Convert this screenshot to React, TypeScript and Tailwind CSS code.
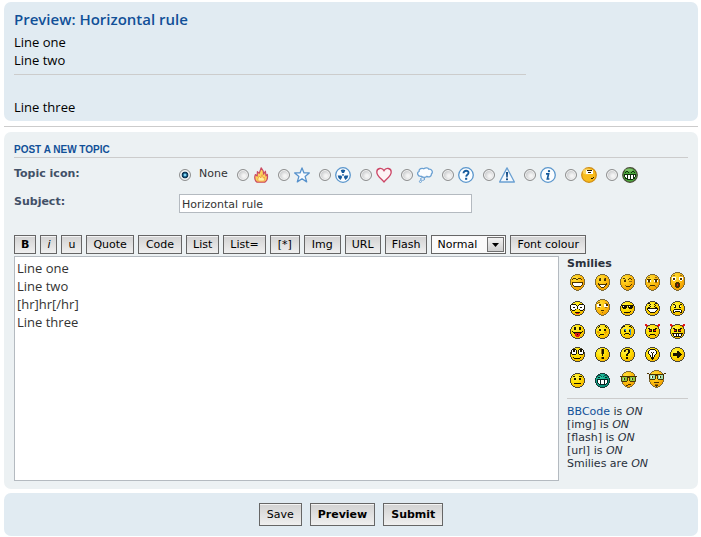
import { useState, type ReactNode } from "react";

const INK: Record<string, string> = {
  k: "#1a1400",
  w: "#ffffff",
  r: "#e01818",
  b: "#2a8ad8",
  o: "#eaa000",
  n: "#9a6c10",
  g: "#8fc83c",
  l: "#9fe0b0",
  t: "#0a5c50",
};

type FaceSpec = {
  name: string;
  w?: number;
  h?: number;
  tone?: "yellow" | "gold" | "teal";
  rows: string[];
};

const TONES = {
  yellow: { edge: "#4a4636", from: "#fff24a", mid: "#ffe000", to: "#f5b400", ink: "#1a1400" },
  gold: { edge: "#7d6a36", from: "#ffe23c", mid: "#fdc010", to: "#f09a00", ink: "#4a3200" },
  teal: { edge: "#163c38", from: "#2cc8a4", mid: "#12a88c", to: "#0a8a74", ink: "#062420" },
};

// Each face is a pixel-edged disc (or a taller egg) with its features drawn from a character map.
function Face({ name, w = 15, h = 15, tone = "yellow", rows }: FaceSpec) {
  const c = TONES[tone];
  const left = Math.floor((w - 15) / 2);
  const egg = h > 15;
  const side = h - 11;
  const outer = egg
    ? `M5 0h5v1h2v1h1v1h1v2h1v${side}h-1v2h-1v1h-1v1h-1v1h-2v1h-3v-1h-2v-1h-1v-1h-1v-1h-1v-2h-1v-${side}h1v-2h1v-1h1v-1h2z`
    : "M5 0h5v1h2v1h1v1h1v2h1v5h-1v2h-1v1h-1v1h-2v1h-5v-1h-2v-1h-1v-1h-1v-2h-1v-5h1v-2h1v-1h1v-1h2z";
  const inner = egg
    ? `M5 1h5v1h2v1h1v2h1v${side}h-1v2h-1v1h-1v1h-2v1h-3v-1h-2v-1h-1v-1h-1v-2h-1v-${side}h1v-2h1v-1h2z`
    : "M5 1h5v1h2v1h1v2h1v5h-1v2h-1v1h-2v1h-5v-1h-2v-1h-1v-2h-1v-5h1v-2h1v-1h2z";
  const id = `face-${name}`;
  return (
    <svg width={w} height={h} viewBox={`0 0 ${w} ${h}`} shapeRendering="crispEdges" role="img" aria-label={name}>
      <defs>
        <radialGradient id={id} cx="35%" cy="28%" r="80%">
          <stop offset="0" stopColor={c.from} />
          <stop offset="0.5" stopColor={c.mid} />
          <stop offset="1" stopColor={c.to} />
        </radialGradient>
      </defs>
      <g transform={`translate(${left} 0)`}>
        <path d={outer} fill={c.edge} />
        <path d={inner} fill={`url(#${id})`} />
      </g>
      {rows.flatMap((row, y) =>
        row.split("").map((ch, x) =>
          INK[ch] ? (
            <rect key={`${x}-${y}`} x={x} y={y} width="1" height="1" fill={ch === "k" ? c.ink : INK[ch]} />
          ) : null
        )
      )}
    </svg>
  );
}

const SMILIES: FaceSpec[][] = [
  [
    { name: "very-happy", h: 17, tone: "gold", rows: ["", "", "", "", "...kkk..kkk", "..k...kk...k", "", "", "..kkkkkkkkkkk", "..kwwwwwwwwwk", "..kwwwwwwwwwk", "...kwwwwwwwk", "....kkkkkkk"] },
    { name: "smile", h: 17, tone: "gold", rows: ["", "", "", "", "....nk...nk", "....kk...kk", "....kk...kk", "", "", "...k.......k", "...kkkkkkkkk", "....kwwwwwk", ".....kwwwk", "......kkk"] },
    { name: "wink", h: 17, tone: "gold", rows: ["", "", "", "", "...kk....kk", ".....n..k..k", "....kk", "....kk...nnn", "", "", "...........k", ".....n....k", "......kkkk"] },
    { name: "sad", h: 17, tone: "gold", rows: ["", "", "", "...nn.....nn", "", "..kkkk...kkkk", "..wkkw...wkkw", "..wkkw...wkkw", "...nn.....nn", "", "", ".....kkkkk", "....n.....n", "...n.......n"] },
    { name: "surprised", h: 19, tone: "gold", rows: ["", "", "", "...nn.....nn", "", "..wwww...wwww", "..wkkw...wkkw", "..wkkw...wkkw", "...ww.....ww", "", "......kkk", ".....kkkkk", ".....kkrkk", ".....kkrkk", ".....kkkkk", "......kkk"] },
  ],
  [
    { name: "shocked", rows: ["", "", "", ".kkkkk...kkkkk", "kwwwwwk.kwwwwwk", "kwwwwwwkwwwwwwk", "kwwkkwwkwwkkwwk", "kwwwwwwkwwwwwwk", ".kwwwk...kwwwk", "..kkk.....kkk", "", ".....kkkkk", "......rrr"] },
    { name: "confused", h: 17, tone: "gold", rows: ["", "", "", "...nn", "..n.......nn", "..wwkk...wwkk", "..wwkk...wwkk", "..wwww...wwww", "...nn.....nn", "", "", "......kkk", "", ".......n"] },
    { name: "cool", rows: ["", "", "", "", ".kkkkkkkkkkkkk", "..kwkkk.kwkkk", "..kkkkk.kkkkk", "...kkk...kkk", "", "", "..........k", "....kkkkkk", "......oo"] },
    { name: "laughing", rows: ["", "", "...kk.....kk", ".....k...k", "....k.....k", ".....k...k", "...kk.....kk", "..kkkkkkkkkkk", "..kwwwwwwwwwk", "...kwwwwwwwk", "....kwwwwwk", ".....kkkkk"] },
    { name: "mad", rows: ["", "", "", "...kk.....kk", ".....k...k", "....wk...kw", "....kk...kk", "", "....kkkkkkk", "...kwwwwwwwk", "...kwkkkkkwk", "...kk.....kk"] },
  ],
  [
    { name: "razz", rows: ["", "", "", "....kk...kk", "....kk...kk", "....kk...kk", "", "..k.........k", "...kkkkkkkkk", "....krrrrrk", ".....rrkrr", ".....rrrrr", "......rrr"] },
    { name: "embarrassed", rows: ["", "", "....k.....k", "...k.......k", "", "....kk...kk", "....kk...kk", "..oo......oo", "..ooo....ooo", "...o......o", ".....kkkk", "....k"] },
    { name: "crying", rows: ["", "", "...kk....kk", "..k........k", "", "....bb...bb", "....kb...kb", "....kk...kb", "..........b", ".....kkkk.b", "....k....kb"] },
    { name: "evil", rows: ["rr...........rr", "rrr.........rrr", ".r...........r", "", "...kk.....kk", "....kkk.kkk", "....rrk.krr", "....kkk.kkk", "", "", ".....kkkkk", "....k.....k"] },
    { name: "twisted", rows: ["rr...........rr", "rrr.........rrr", ".r...........r", "", "...kk.....kk", "....kkk.kkk", "....rrk.krr", "....kkk.kkk", "", "..kkkkkkkkkkk", "...kwwkwkwwk", "...kwwkwkwwk", "....kkkkkkk"] },
  ],
  [
    { name: "rolling", rows: ["", "", "..kkkk...kkkk", ".kwkkwk.kwkkwk", ".kwkkwk.kwkkwk", ".kwwwwk.kwwwwk", ".kwwwwk.kwwwwk", "..kkkk...kkkk", "", "", "...k......k", "....kkkkkk"] },
    { name: "exclamation", rows: ["", "", "......nkk", "......nkk", "......nkk", "......nkk", "......nkk", ".......k", ".......k", "", "......nkk", "......nkk"] },
    { name: "question", rows: ["", "", ".....nkkkn", "....kk..kk", "....kn..kk", "........kk", ".......kk", "......kk", "......kk", "", "......kk", "......kk"] },
    { name: "idea", rows: ["", "", ".....kkkkk", "....kwwwwwk", "...kwwwwwwwk", "...kwwkwkwwk", "...kwwwkwwwk", "....kwwkwwk", ".....kwkwk", ".....kwkwk", "......kkk", "......kkk", ".......k"] },
    { name: "arrow", rows: ["", "", "", "", ".......kk", ".......kkk", "...kkkkkkkk", "...kkkkkkkkk", "...kkkkkkkk", ".......kkk", ".......kk"] },
  ],
  [
    { name: "neutral", rows: ["", "", "", "...kk....kkk", "", "....kk...kk", "....kk...kk", "", "", "", "....kkkkkkk"] },
    { name: "mr-green", tone: "teal", rows: ["", "", "...ttt...ttt", "..t...t.t...t", "...kk.....kk", "", "..kkkkkkkkkkk", "..kwwkwwwkwwk", "..kwwkwwwkwwk", "..kwwkwwwkwwk", "...kwkwwwkwk", "....kkkkkkk"] },
    { name: "geek", w: 17, h: 17, tone: "gold", rows: ["", "", "", "", "", "kkkkkkkkkkkkkkkkk", ".kgggggkkkgggggk", ".kglkggk.kglkggk", ".kglkggk.kglkggk", ".kgggggk.kgggggk", "..kkkkk...kkkkk", "", "", "........kkk", "......kk"] },
    { name: "ugeek", w: 19, h: 18, tone: "gold", rows: ["", "", "", "kk...............kk", "..kkkkkkkkkkkkkkk", "..klllllkkklllllk", "..klwkllk.klwkllk", "..klwkllk.klwkllk", "..klllllk.klllllk", "...kkkkk...kkkkk", "", "", ".......kkkkk", "", "........nnn", "........kkk", ".........k"] },
  ],
];

function Icon({ label, children }: { label: string; children: ReactNode }) {
  return (
    <svg width="16" height="16" viewBox="0 0 16 16" role="img" aria-label={label} className="shrink-0">
      {children}
    </svg>
  );
}

const Ring = () => <circle cx="8" cy="8" r="7.3" fill="#fbfdff" stroke="#5a96cc" strokeWidth="1.3" />;

const TOPIC_ICONS: { label: string; art: ReactNode }[] = [
  {
    label: "Fire",
    art: (
      <Icon label="Fire">
        <path d="M4 15.2C1.6 13.6 1.2 11 2.3 7.6L4.2 9 4.4 4.6 6.2 6.4 8.2.8l2 3.2.4 3.2 1.8-3 .6 4.6 1.3-1.4c.7 3.8-.3 6.4-2.5 7.8z" fill="#fbd45c" stroke="#cc4c62" strokeWidth="1.2" strokeLinejoin="round" />
        <path d="M5.3 14.2c-1.2-2 .2-3.4 1-5.2l1.5 2L9 7.6l1.4 3.6.9-1c.6 1.8.2 3-.8 4z" fill="#fff3a0" stroke="#f0943c" strokeWidth=".8" />
      </Icon>
    ),
  },
  {
    label: "Star",
    art: (
      <Icon label="Star">
        <path d="M8 .9l2 5h5.3l-4.2 3.5 1.6 5.5L8 11.7l-4.7 3.2 1.6-5.5L.7 5.9H6z" fill="#f6fafe" stroke="#5792cc" strokeWidth="1.3" strokeLinejoin="round" />
      </Icon>
    ),
  },
  {
    label: "Radioactive",
    art: (
      <Icon label="Radioactive">
        <Ring />
        <g fill="#155a9c">
          <path d="M5.7 3.2Q8 2 10.3 3.2L9 6H7z" />
          <path d="M2.7 8.4h3.5l1 1.7-1.6 2.8Q2.9 11.4 2.7 8.4z" />
          <path d="M13.3 8.4H9.8l-1 1.7 1.6 2.8Q13.1 11.4 13.3 8.4z" />
          <circle cx="8" cy="7.9" r=".9" />
        </g>
      </Icon>
    ),
  },
  {
    label: "Heart",
    art: (
      <Icon label="Heart">
        <path d="M8 15C6 12 .8 9.4.8 5 .8 1 6 .1 8 3.6 10 .1 15.2 1 15.2 5 15.2 9.4 10 12 8 15z" fill="#fdf3f5" stroke="#cc4666" strokeWidth="1.3" />
      </Icon>
    ),
  },
  {
    label: "Thought",
    art: (
      <Icon label="Thought">
        <path d="M4.4 9.3C.4 9.8-.4 5.6 2 4.5 1.8 1.8 5 .6 6.8 1.8c2-1.6 4.4-1 5 .4 3-.4 4.6 3 2.6 4.8.2 2.4-2.6 3.6-4.6 2.4-1.2 1-3.8 1-5.4-.1z" fill="#fbfdff" stroke="#6aa0d2" strokeWidth="1.3" />
        <ellipse cx="5.6" cy="12" rx="2.1" ry="1.3" fill="#fff" stroke="#6aa0d2" />
        <circle cx="3.4" cy="14.5" r="1" fill="#fff" stroke="#6aa0d2" />
      </Icon>
    ),
  },
  {
    label: "Question",
    art: (
      <Icon label="Question">
        <Ring />
        <path d="M5.5 6.2C5.4 3 10.8 3 10.5 6 10.3 7.9 8.3 7.6 8.2 9.6" fill="none" stroke="#155a9c" strokeWidth="1.9" />
        <rect x="7.1" y="10.8" width="2.1" height="2" fill="#155a9c" />
      </Icon>
    ),
  },
  {
    label: "Alert",
    art: (
      <Icon label="Alert">
        <path d="M8 .9L15.4 15H.6z" fill="#f4f9fe" stroke="#6aa0d2" strokeWidth="1.3" strokeLinejoin="round" />
        <path d="M6.9 5h2.2l-.4 5.4H7.3z" fill="#164f88" />
        <rect x="7" y="11.4" width="2" height="1.8" fill="#164f88" />
      </Icon>
    ),
  },
  {
    label: "Information",
    art: (
      <Icon label="Information">
        <Ring />
        <path d="M6 6.8h2.6L7.4 12h2" fill="none" stroke="#155a9c" strokeWidth="1.7" />
        <circle cx="9" cy="4.1" r="1.2" fill="#155a9c" />
      </Icon>
    ),
  },
  {
    label: "Oh",
    art: (
      <Icon label="Oh">
        <circle cx="8" cy="8" r="7.3" fill="#f8bc1c" stroke="#d08c14" strokeWidth="1.2" />
        <ellipse cx="6" cy="4.6" rx="4.4" ry="3" fill="#ffe88a" opacity=".6" />
        <rect x="5" y="3" width="7" height="4" fill="#fff" />
        <path d="M6 3h5v1H6zM7 5h3v1H7zM12 10h1v1h-1zM10 11h2v1h-2z" fill="#241800" />
      </Icon>
    ),
  },
  {
    label: "Mr. Green",
    art: (
      <Icon label="Mr. Green">
        <circle cx="8" cy="8" r="7.3" fill="#4aa63a" stroke="#4a4a38" strokeWidth="1.2" />
        <ellipse cx="7" cy="3" rx="4" ry="1.6" fill="#8fd078" opacity=".7" />
        <path d="M3 5h1V4h2v1h1v1H6V5H4v1H3zM9 5h1V4h2v1h1v1h-1V5h-2v1H9zM2 7h12v3h-1v2h-2v1H5v-1H3v-2H2z" fill="#12300e" />
        <path d="M3 8h2v2H3zM6 8h2v4H6zM9 8h2v4H9zM12 8h1v2h-1zM4 10h1v1H4z" fill="#fff" />
      </Icon>
    ),
  },
];

const TAGS: { text: string; style: string }[] = [
  { text: "B", style: "px-1.5 font-bold" },
  { text: "i", style: "px-1.5 italic" },
  { text: "u", style: "px-1.5" },
  { text: "Quote", style: "px-1.5" },
  { text: "Code", style: "px-[7px]" },
  { text: "List", style: "px-1.5" },
  { text: "List=", style: "px-1.5" },
  { text: "[*]", style: "px-[7px]" },
  { text: "Img", style: "px-[7px]" },
  { text: "URL", style: "px-1.5" },
  { text: "Flash", style: "px-1.5" },
];

const BUTTON =
  "border border-[#666] bg-linear-to-b from-[#d2d2d2] to-[#efefef] text-black shadow-[inset_0_1px_0_#f4f4f4]";
const RADIO =
  "size-3 shrink-0 appearance-none rounded-full border border-[#8e8f8f] bg-[radial-gradient(circle_at_60%_60%,#f4f4f4_15%,#c2c4c6_75%)] shadow-[inset_0_0_0_1px_#f4f4f4] checked:bg-[radial-gradient(circle,#7fd4f4_0_12%,#14587f_26%,#0c2c4a_42%,#e4e8ea_52%)]";

function TagButton({ text, style }: { text: string; style: string }) {
  return (
    <button type="button" className={`${BUTTON} h-[19px] text-[11px] leading-[17px] ${style}`}>
      {text}
    </button>
  );
}

export default function App() {
  const [icon, setIcon] = useState("None");
  const [subject, setSubject] = useState("Horizontal rule");
  const [message, setMessage] = useState("Line one\nLine two\n[hr]hr[/hr]\nLine three");

  return (
    <main className="bg-white pt-0.5 pr-[3px] pl-1 font-['Verdana','DejaVu_Sans',sans-serif] text-[11px] text-[#333]">
      <section className="rounded-[7px] bg-[#e1ebf2] px-2.5 pt-[7px] pb-[5px] font-['Trebuchet_MS','Open_Sans',sans-serif] text-[13px] text-black">
        <h3 className="text-[15px] leading-5 font-semibold text-[#115098]">Preview: Horizontal rule</h3>
        <div className="pt-1 leading-[18px]">
          <p>Line one</p>
          <p>Line two</p>
          <hr className="mt-[5px] mb-[23px] w-[76%] border-[#ccc]" />
          <p>Line three</p>
        </div>
      </section>

      <hr className="my-[5px] border-[#ccc]" />

      <form onSubmit={(e) => e.preventDefault()}>
        <section className="rounded-[7px] bg-[#ecf1f3] px-2.5 pt-2.5 pb-2">
          <h3 className="border-b border-[#ccc] pt-0.5 pb-px font-['Arial','Liberation_Sans',sans-serif] text-[10px] leading-3 font-bold text-[#115098] uppercase">
            Post a new topic
          </h3>

          <div role="radiogroup" aria-labelledby="topic-icon" className="flex h-[33px] items-center">
            <span id="topic-icon" className="w-[165px] shrink-0 font-bold text-[#425067]">
              Topic icon:
            </span>
            <div className="flex items-center gap-1">
              <label className="flex w-[54px] items-center gap-2">
                <input type="radio" name="icon" className={RADIO} checked={icon === "None"} onChange={() => setIcon("None")} />
                None
              </label>
              {TOPIC_ICONS.map(({ label, art }) => (
                <label key={label} className="flex w-[37px] items-center gap-1">
                  <input type="radio" name="icon" className={RADIO} checked={icon === label} onChange={() => setIcon(label)} />
                  {art}
                </label>
              ))}
            </div>
          </div>

          <div className="flex pt-[3px]">
            <label htmlFor="subject" className="w-[165px] shrink-0 leading-[15px] font-bold text-[#425067]">
              Subject:
            </label>
            <input
              id="subject"
              type="text"
              value={subject}
              onChange={(e) => setSubject(e.target.value)}
              className="h-[19px] w-[293px] border border-[#b4bac0] bg-white px-0.5 pt-px text-[#333]"
            />
          </div>

          <div className="flex gap-1 pt-[22px]">
            {TAGS.map((tag) => (
              <TagButton key={tag.text} {...tag} />
            ))}
            <div className="relative">
              <select
                aria-label="Font size"
                defaultValue="Normal"
                className="h-[19px] w-[75px] appearance-none border border-[#666] bg-[#fafafa] px-[5px] text-[11px] leading-[17px] text-black"
              >
                <option>Tiny</option>
                <option>Small</option>
                <option>Normal</option>
                <option>Large</option>
                <option>Huge</option>
              </select>
              <span className="pointer-events-none absolute top-0.5 right-0.5 flex h-[15px] w-[17px] items-center justify-center border border-[#707070] bg-linear-to-b from-[#f2f2f2] to-[#cfcfcf]">
                <svg width="7" height="4" viewBox="0 0 7 4" aria-hidden="true">
                  <path d="M0 0h7L3.5 4z" fill="#000" />
                </svg>
              </span>
            </div>
            <TagButton text="Font colour" style="px-1.5" />
          </div>

          <div className="flex gap-2 pt-0.5">
            <textarea
              aria-label="Message"
              value={message}
              onChange={(e) => setMessage(e.target.value)}
              className="h-[225px] min-w-0 flex-1 resize-none border border-[#b4bac0] bg-white p-0.5 font-['Lucida_Grande','Open_Sans',sans-serif] text-[13px] leading-[18px] text-[#333]"
            />
            <aside className="w-[121px] shrink-0 text-[#29303b]">
              <h4 className="leading-4 font-bold">Smilies</h4>
              <div className="flex flex-col gap-2 border-b border-[#ccc] px-[3px] pb-2.5">
                {SMILIES.map((row) => (
                  <div key={row[0].name} className="flex items-end gap-2.5">
                    {row.map((face) => (
                      <Face key={face.name} {...face} />
                    ))}
                  </div>
                ))}
              </div>
              <div className="pt-1.5 leading-[13px]">
                <p>
                  <a href="#bbcode" className="text-[#115098]">BBCode</a> is <em>ON</em>
                </p>
                <p>[img] is <em>ON</em></p>
                <p>[flash] is <em>ON</em></p>
                <p>[url] is <em>ON</em></p>
                <p>Smilies are <em>ON</em></p>
              </div>
            </aside>
          </div>
        </section>

        <section className="mt-1 flex justify-center gap-2 rounded-[7px] bg-[#e1ebf2] py-2.5">
          <button type="button" className={`${BUTTON} h-[23px] px-[7px] pt-0.5`}>Save</button>
          <button type="button" className={`${BUTTON} h-[23px] px-[7px] pt-0.5 font-bold`}>Preview</button>
          <button type="submit" className={`${BUTTON} h-[23px] px-[7px] pt-0.5 font-bold`}>Submit</button>
        </section>
      </form>
    </main>
  );
}
